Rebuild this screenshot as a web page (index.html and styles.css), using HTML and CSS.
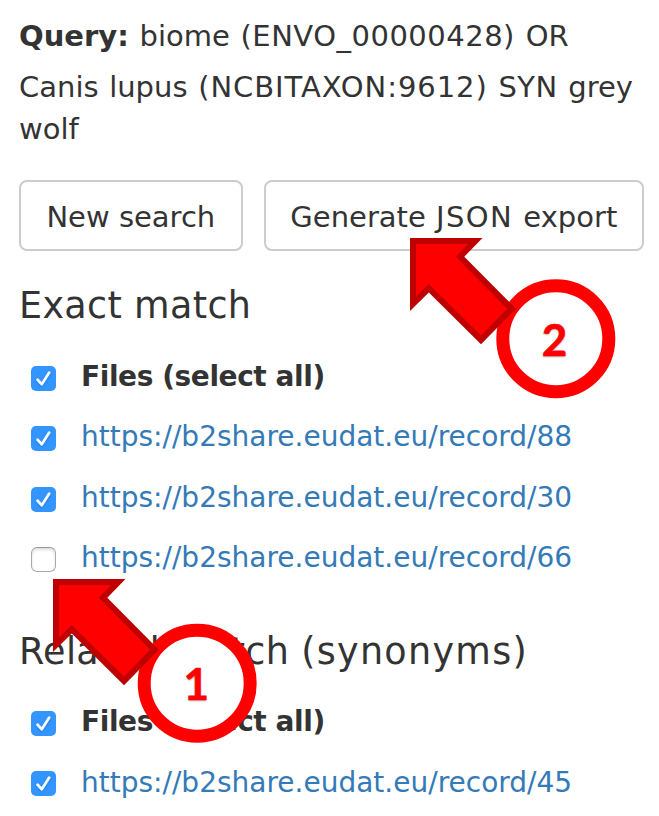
FILE: index.html
```html
<!DOCTYPE html>
<html lang="en">
<head>
<meta charset="utf-8">
<title>Query results</title>
<link rel="stylesheet" href="styles.css">
</head>
<body>
<main class="page">
  <p class="query"><b class="label">Query:</b> biome <span class="envo">(ENVO_00000428)</span> OR</p>
  <p class="query second">Canis lupus <span class="taxon">(NCBITAXON:9612)</span> <span class="syn">SYN</span> grey wolf</p>
  <div class="actions">
    <button class="btn new">New search</button>
    <button class="btn export">Generate <span class="caps">JSON</span> export</button>
  </div>
  <section class="group">
    <h2 class="exact">Exact match</h2>
    <ul class="files">
      <li class="row"><span class="box on"><svg viewBox="0 0 25 25"><path d="M6.6 13.8 10.8 18.2 18.2 6.6"/></svg></span><b class="all">Files (select all)</b></li>
      <li class="row"><span class="box on"><svg viewBox="0 0 25 25"><path d="M6.6 13.8 10.8 18.2 18.2 6.6"/></svg></span><a class="link">https://b2share.eudat.eu/record/88</a></li>
      <li class="row"><span class="box on"><svg viewBox="0 0 25 25"><path d="M6.6 13.8 10.8 18.2 18.2 6.6"/></svg></span><a class="link">https://b2share.eudat.eu/record/30</a></li>
      <li class="row"><span class="box"></span><a class="link">https://b2share.eudat.eu/record/66</a></li>
    </ul>
  </section>
  <section class="group related">
    <h2>Related match <span class="synonyms">(synonyms)</span></h2>
    <ul class="files">
      <li class="row"><span class="box on"><svg viewBox="0 0 25 25"><path d="M6.6 13.8 10.8 18.2 18.2 6.6"/></svg></span><b class="all">Files (select all)</b></li>
      <li class="row"><span class="box on"><svg viewBox="0 0 25 25"><path d="M6.6 13.8 10.8 18.2 18.2 6.6"/></svg></span><a class="link">https://b2share.eudat.eu/record/45</a></li>
    </ul>
  </section>
  <div class="callout two">
    <svg class="arrow" viewBox="0 0 206 162"><circle cx="145.8" cy="100.7" r="53" /><path class="edge" d="M0 0H72.5L54.3 18.7 105.8 70.7 71 106.3 18.8 54.5 0 73Z"/><path class="fill" d="M6 6H58L45.8 18.7 97.2 70.7 71 97.5 18.8 46 6 58.5Z"/></svg>
    <span class="num">2</span>
  </div>
  <div class="callout one">
    <svg class="arrow" viewBox="0 0 206 166"><circle cx="144.2" cy="104.2" r="53" /><path class="edge" d="M0 0H72.5L54.3 18.7 105.8 70.7 71 106.3 18.8 54.5 0 73Z"/><path class="fill" d="M6 6H58L45.8 18.7 97.2 70.7 71 97.5 18.8 46 6 58.5Z"/></svg>
    <span class="num">1</span>
  </div>
</main>
</body>
</html>
```
FILE: styles.css
```css
* { box-sizing: border-box; }
body { margin: 0; background: #fff; color: #333; font-family: Verdana, "DejaVu Sans", sans-serif; }
.page { position: relative; width: 659px; height: 816px; padding: 15px 15px 0 19px; overflow: hidden; }
p, h2, ul { margin: 0; padding: 0; }
.query { font-size: 29px; line-height: 42px; word-spacing: 1.5px; }
.query.second { margin-top: 9px; word-spacing: 1.4px; }
.envo { letter-spacing: 0.5px; }
.taxon { letter-spacing: 0.95px; }
.syn { letter-spacing: 0.5px; }
.caps { letter-spacing: 1.4px; }
.actions { display: flex; gap: 21px; margin-top: 30px; }
.btn { height: 71px; padding: 2px 0 0; border: 2px solid #ccc; border-radius: 8px; background: #fff; color: #333; font: 29px/42px Verdana, "DejaVu Sans", sans-serif; white-space: nowrap; }
.new { width: 224px; }
.export { width: 381px; word-spacing: 1px; }
h2 { height: 50px; padding-top: 1px; font-size: 36.5px; line-height: 50px; font-weight: 400; letter-spacing: 0.35px; white-space: nowrap; }
.synonyms { letter-spacing: 1.3px; }
.group { margin-top: 29px; }
.related { margin-top: 39px; }
.files { list-style: none; padding: 15px 0 0 12px; }
.related .files { padding-top: 14px; }
.row { display: flex; align-items: center; gap: 25px; height: 60.5px; font-size: 28px; line-height: 40px; white-space: nowrap; }
.box { width: 25px; height: 25px; margin-top: 6px; border: 1px solid #aaa; border-top-color: #999; border-radius: 6px; box-shadow: inset 0 2px 3px #ddd; }
.box.on { border: 0; border-radius: 5px; background: #3395ff; box-shadow: none; }
.box svg { display: block; width: 25px; height: 25px; fill: none; stroke: #fff; stroke-width: 2.7; stroke-linecap: round; stroke-linejoin: round; filter: drop-shadow(0 1px 1px #0066cc88); }
.all { margin-top: 4px; letter-spacing: -0.42px; }
.link { margin-top: 3px; color: #337ab7; }
.related .link { margin-top: 5px; }
.callout { position: absolute; width: 206px; }
.callout.two { left: 409.5px; top: 238.3px; }
.callout.one { left: 53.3px; top: 579.3px; }
.arrow { display: block; width: 206px; }
.arrow circle { fill: #fff; stroke: #f00; stroke-width: 13; }
.edge { fill: #c00000; }
.fill { fill: #f00; }
.num { position: absolute; width: 40px; text-align: center; color: #f00; font: 700 44px/50px Lato, sans-serif; text-shadow: 0 1px 2px #0005; -webkit-text-stroke: 0.6px #f00; }
.two .num { left: 125px; top: 76px; }
.one .num { left: 123px; top: 79px; }
```
